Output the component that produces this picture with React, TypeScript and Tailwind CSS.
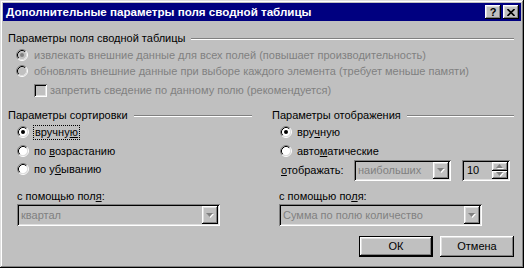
import React from 'react';

const raised =
  'shadow-[inset_-1px_-1px_0_#000,inset_1px_1px_0_#fff,inset_-2px_-2px_0_#808080,inset_2px_2px_0_#dfdfdf]';
const sunken =
  'shadow-[inset_1px_1px_0_#808080,inset_-1px_-1px_0_#fff,inset_2px_2px_0_#000,inset_-2px_-2px_0_#dfdfdf]';

function Radio({ checked, disabled }: { checked?: boolean; disabled?: boolean }) {
  return (
    <svg width="12" height="12" viewBox="0 0 12 12" className="shrink-0">
      <circle cx="6" cy="6" r="4.5" fill={disabled ? '#c0c0c0' : '#fff'} />
      <path d="M2.11 9.89 A5.5 5.5 0 0 1 9.89 2.11" fill="none" stroke="#808080" />
      <path d="M9.89 2.11 A5.5 5.5 0 0 1 2.11 9.89" fill="none" stroke="#fff" />
      <path d="M2.82 9.18 A4.5 4.5 0 0 1 9.18 2.82" fill="none" stroke="#000" />
      <path d="M9.18 2.82 A4.5 4.5 0 0 1 2.82 9.18" fill="none" stroke="#dfdfdf" />
      {checked && <circle cx="6" cy="6" r="2" fill={disabled ? '#808080' : '#000'} />}
    </svg>
  );
}

function Arrow({ up, disabled }: { up?: boolean; disabled?: boolean }) {
  const d = up ? 'M3.5 0 L7 4 L0 4 Z' : 'M0 0 L7 0 L3.5 4 Z';
  return (
    <svg width="8" height="5" viewBox="0 0 8 5">
      {disabled && <path d={d} fill="#fff" transform="translate(1 1)" />}
      <path d={d} fill={disabled ? '#808080' : '#000'} />
    </svg>
  );
}

function GroupHeader({ title }: { title: string }) {
  return (
    <div className="h-[14px] flex items-center">
      <span>{title}</span>
      <div className="flex-1 ml-[6px] h-[2px] border-t border-b border-t-[#808080] border-b-white mt-[2px]" />
    </div>
  );
}

function Combo({ text, width }: { text: string; width: string }) {
  return (
    <div className={`${width} h-[22px] flex p-[2px] ${sunken}`}>
      <div className="flex-1 flex items-center pl-[2px] text-[#808080]">{text}</div>
      <div className={`w-[16px] flex items-center justify-center bg-[#c0c0c0] ${raised}`}>
        <Arrow disabled />
      </div>
    </div>
  );
}

function Btn({ children, def }: { children: React.ReactNode; def?: boolean }) {
  return (
    <div
      className={`w-[74px] h-[21px] flex items-center justify-center ${
        def
          ? 'shadow-[inset_0_0_0_1px_#000,inset_-2px_-2px_0_#000,inset_2px_2px_0_#fff,inset_-3px_-3px_0_#808080,inset_3px_3px_0_#dfdfdf]'
          : raised
      }`}
    >
      {children}
    </div>
  );
}

export default function App() {
  return (
    <div
      className={`w-[524px] h-[268px] bg-[#c0c0c0] p-[3px] flex flex-col font-['Liberation_Sans',Arial,sans-serif] text-[11px] leading-none text-black select-none shadow-[inset_-1px_-1px_0_#000,inset_1px_1px_0_#dfdfdf,inset_-2px_-2px_0_#808080,inset_2px_2px_0_#fff]`}
    >
      <div className="h-[18px] shrink-0 bg-[#000080] flex items-center pl-[3px] pr-[2px]">
        <span className="text-white font-bold text-[11.6px]">Дополнительные параметры поля сводной таблицы</span>
        <div className="ml-auto flex items-center">
          <div className={`w-[16px] h-[14px] flex items-center justify-center bg-[#c0c0c0] font-bold text-[11px] ${raised}`}>
            ?
          </div>
          <div className={`ml-[2px] w-[16px] h-[14px] flex items-center justify-center bg-[#c0c0c0] ${raised}`}>
            <svg width="8" height="7" viewBox="0 0 8 7">
              <path d="M0.5 0 L7.5 7 M7.5 0 L0.5 7" stroke="#000" strokeWidth="1.6" />
            </svg>
          </div>
        </div>
      </div>

      <div className="flex flex-col pl-[5px] pr-[7px]">
        <div className="mt-[10px]">
          <GroupHeader title="Параметры поля сводной таблицы" />
        </div>
        <div className="mt-[3px] h-[14px] flex items-center pl-[8px] gap-[6px] text-[#808080]">
          <Radio checked disabled />
          <span>извлекать внешние данные для всех полей (повышает производительность)</span>
        </div>
        <div className="mt-[2px] h-[14px] flex items-center pl-[8px] gap-[6px] text-[#808080]">
          <Radio disabled />
          <span>обновлять внешние данные при выборе каждого элемента (требует меньше памяти)</span>
        </div>
        <div className="mt-[5px] h-[14px] flex items-center pl-[26px] gap-[3px] text-[#808080]">
          <div className={`w-[13px] h-[13px] bg-[#c0c0c0] ${sunken}`} />
          <span>запретить сведение по данному полю (рекомендуется)</span>
        </div>

        <div className="mt-[11px] grid grid-cols-[244px_242px] gap-x-[20px]">
          <div className="flex flex-col">
            <GroupHeader title="Параметры сортировки" />
            <div className="mt-[3px] h-[14px] flex items-center pl-[9px] gap-[4px]">
              <Radio checked />
              <span className="border border-dotted border-black px-[1px] py-[1px]">
                вручну<u>ю</u>
              </span>
            </div>
            <div className="mt-[5px] h-[14px] flex items-center pl-[9px] gap-[5px]">
              <Radio />
              <span>
                по <u>в</u>озрастанию
              </span>
            </div>
            <div className="mt-[4px] h-[14px] flex items-center pl-[9px] gap-[5px]">
              <Radio />
              <span>
                по у<u>б</u>ыванию
              </span>
            </div>
            <div className="mt-[13px] h-[14px] flex items-center pl-[9px]">
              <span>
                с помощью пол<u>я</u>:
              </span>
            </div>
            <div className="mt-[1px] pl-[9px]">
              <Combo text="квартал" width="w-[203px]" />
            </div>
          </div>

          <div className="flex flex-col">
            <GroupHeader title="Параметры отображения" />
            <div className="mt-[3px] h-[14px] flex items-center pl-[8px] gap-[5px]">
              <Radio checked />
              <span>
                вру<u>ч</u>ную
              </span>
            </div>
            <div className="mt-[5px] h-[14px] flex items-center pl-[8px] gap-[5px]">
              <Radio />
              <span>
                авто<u>м</u>атические
              </span>
            </div>
            <div className="mt-[2px] h-[21px] flex items-center pl-[9px]">
              <span className="w-[73px]">
                <u>о</u>тображать:
              </span>
              <div className="h-[21px]">
                <div className={`w-[97px] h-[21px] flex p-[2px] ${sunken}`}>
                  <div className="flex-1 flex items-center pl-[2px] text-[#808080]">наибольших</div>
                  <div className={`w-[16px] flex items-center justify-center bg-[#c0c0c0] ${raised}`}>
                    <Arrow disabled />
                  </div>
                </div>
              </div>
              <div className={`ml-[11px] w-[48px] h-[21px] flex p-[2px] ${sunken}`}>
                <div className="flex-1 flex items-center pl-[3px]">10</div>
                <div className="w-[16px] flex flex-col">
                  <div className={`flex-1 flex items-center justify-center ${raised}`}>
                    <Arrow up disabled />
                  </div>
                  <div className={`flex-1 flex items-center justify-center ${raised}`}>
                    <Arrow disabled />
                  </div>
                </div>
              </div>
            </div>
            <div className="mt-[8px] h-[14px] flex items-center pl-[7px]">
              <span>
                с помощью по<u>л</u>я:
              </span>
            </div>
            <div className="mt-[1px] pl-[7px]">
              <Combo text="Сумма по полю количество" width="w-[203px]" />
            </div>
            <div className="mt-[10px] flex justify-end gap-[7px]">
              <Btn def>ОК</Btn>
              <Btn>Отмена</Btn>
            </div>
          </div>
        </div>
      </div>
    </div>
  );
}
